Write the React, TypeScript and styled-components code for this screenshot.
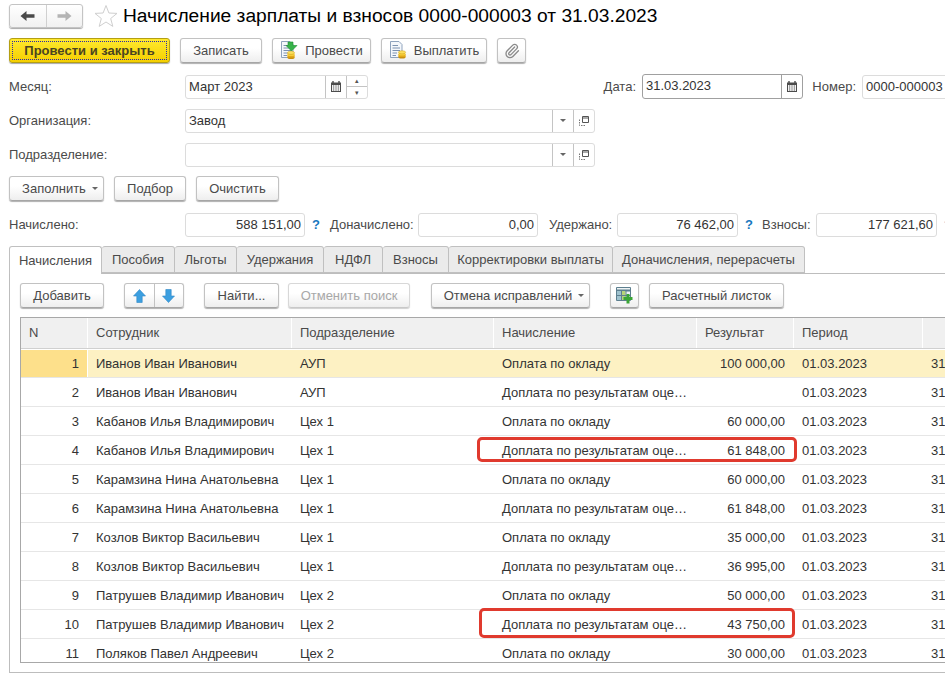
import React from "react";
import styled, { createGlobalStyle } from "styled-components";
import { Paperclip } from "lucide-react";

const GlobalStyle = createGlobalStyle`
  html, body {
    margin: 0;
    padding: 0;
    background: #fff;
  }
  * {
    box-sizing: border-box;
  }
`;

const rows = [
  ["1", "Иванов Иван Иванович", "АУП", "Оплата по окладу", "100 000,00"],
  ["2", "Иванов Иван Иванович", "АУП", "Доплата по результатам оце…", ""],
  ["3", "Кабанов Илья Владимирович", "Цех 1", "Оплата по окладу", "60 000,00"],
  ["4", "Кабанов Илья Владимирович", "Цех 1", "Доплата по результатам оце…", "61 848,00"],
  ["5", "Карамзина Нина Анатольевна", "Цех 1", "Оплата по окладу", "60 000,00"],
  ["6", "Карамзина Нина Анатольевна", "Цех 1", "Доплата по результатам оце…", "61 848,00"],
  ["7", "Козлов Виктор Васильевич", "Цех 1", "Оплата по окладу", "35 000,00"],
  ["8", "Козлов Виктор Васильевич", "Цех 1", "Доплата по результатам оце…", "36 995,00"],
  ["9", "Патрушев Владимир Иванович", "Цех 2", "Оплата по окладу", "50 000,00"],
  ["10", "Патрушев Владимир Иванович", "Цех 2", "Доплата по результатам оце…", "43 750,00"],
  ["11", "Поляков Павел Андреевич", "Цех 2", "Оплата по окладу", "30 000,00"],
];

const tabs = [
  { label: "Начисления", width: 93 },
  { label: "Пособия", width: 73 },
  { label: "Льготы", width: 62 },
  { label: "Удержания", width: 87 },
  { label: "НДФЛ", width: 59 },
  { label: "Взносы", width: 66 },
  { label: "Корректировки выплаты", width: 164 },
  { label: "Доначисления, перерасчеты", width: 192 },
];

const ArrowLeft = ({ color }: { color: string }) => (
  <svg width="15" height="10" viewBox="0 0 15 10">
    <path d="M0.5 5 L6.5 0 V3.3 H14.5 V6.7 H6.5 V10 Z" fill={color} />
  </svg>
);

const ArrowRight = ({ color }: { color: string }) => (
  <svg width="15" height="10" viewBox="0 0 15 10">
    <path d="M14.5 5 L8.5 0 V3.3 H0.5 V6.7 H8.5 V10 Z" fill={color} />
  </svg>
);

const StarIcon = () => (
  <svg width="24" height="24" viewBox="0 0 24 24">
    <path
      d="M12 1.5 L14.9 9 L23 9.4 L16.7 14.5 L18.8 22.4 L12 18 L5.2 22.4 L7.3 14.5 L1 9.4 L9.1 9 Z"
      fill="#fff"
      stroke="#cfcfcf"
      strokeWidth="1"
    />
  </svg>
);

const Coins = ({ x, y }: { x: number; y: number }) => (
  <g transform={`translate(${x} ${y})`}>
    <ellipse cx="4" cy="6.5" rx="3.6" ry="1.6" fill="#c98f10" />
    <rect x="0.4" y="3.5" width="7.2" height="3" fill="#e0a818" />
    <ellipse cx="4" cy="3.5" rx="3.6" ry="1.6" fill="#f7cf3a" />
    <ellipse cx="4" cy="1.8" rx="3.6" ry="1.6" fill="#fbdf5c" stroke="#cf9a14" strokeWidth="0.5" />
  </g>
);

const DocLines = () => (
  <>
    <path d="M1.5 0.5 H10 L13 3.5 V16.5 H1.5 Z" fill="#f4f7fb" stroke="#8fa3bd" />
    <path d="M3.5 4.5 H9 M3.5 7 H11 M3.5 9.5 H11 M3.5 12 H8 M3.5 14.5 H7" stroke="#7c92b0" />
  </>
);

const PostIcon = () => (
  <svg width="19" height="19" viewBox="0 0 19 19">
    <DocLines />
    <Coins x={7} y={10} />
    <path d="M8 1 H13 V4.5 H17 L11.5 10 L6 4.5 H8 Z" fill="#37b34a" stroke="#1f8f33" strokeWidth="0.6" />
  </svg>
);

const PayIcon = () => (
  <svg width="19" height="19" viewBox="0 0 19 19">
    <DocLines />
    <Coins x={9} y={9.5} />
  </svg>
);

const CalendarIcon = () => (
  <svg width="10" height="11" viewBox="0 0 10 11">
    <path d="M0 1.5 H10 V11 H0 Z" fill="#4c4c4c" />
    <path d="M2 0 V2 M8 0 V2" stroke="#4c4c4c" strokeWidth="1.4" />
    <rect x="1" y="4" width="8" height="6" fill="#f2f2f2" />
    <path d="M2 5 H3.2 M4.4 5 H5.6 M6.8 5 H8 M2 7 H3.2 M4.4 7 H5.6 M6.8 7 H8 M2 9 H3.2 M4.4 9 H5.6 M6.8 9 H8" stroke="#555" />
  </svg>
);

const OpenIcon = () => (
  <svg width="10" height="10" viewBox="0 0 10 10">
    <path d="M3.5 0.5 H9.5 V6.5 H3.5 Z M3.5 2 H9.5" fill="#fff" stroke="#555" />
    <path d="M0.5 3.5 V9.5 H6.5" fill="none" stroke="#777" strokeDasharray="1.5 1" />
  </svg>
);

const BlueUp = () => (
  <svg width="13" height="14" viewBox="0 0 13 14">
    <path d="M6.5 0.5 L12.5 7 H9.2 V13.5 H3.8 V7 H0.5 Z" fill="#3c9fe0" stroke="#2f86c6" strokeWidth="0.6" />
  </svg>
);

const BlueDown = () => (
  <svg width="13" height="14" viewBox="0 0 13 14">
    <path d="M6.5 13.5 L12.5 7 H9.2 V0.5 H3.8 V7 H0.5 Z" fill="#3c9fe0" stroke="#2f86c6" strokeWidth="0.6" />
  </svg>
);

const TableAddIcon = () => (
  <svg width="17" height="17" viewBox="0 0 17 17">
    <path d="M0.5 0.5 H14.5 V13.5 H0.5 Z" fill="#eef3f4" stroke="#5d7f8f" />
    <path d="M0.5 3.5 H14.5" stroke="#5d7f8f" strokeWidth="2" />
    <rect x="1" y="4" width="4" height="9" fill="#9fc2ce" />
    <rect x="6" y="4" width="3.5" height="9" fill="#b7d57a" />
    <path d="M5.5 4 V13 M10 4 V13 M1 8.5 H14" stroke="#5d7f8f" />
    <path d="M10.5 7 H13.5 V10 H16.5 V13 H13.5 V16.5 H10.5 V13 H7.5 V10 H10.5 Z" fill="#3aa535" />
  </svg>
);

export default function App() {
  return (
    <Page>
      <GlobalStyle />
      <TitleBar>
        <NavGroup>
          <NavCell>
            <ArrowLeft color="#4a4a4a" />
          </NavCell>
          <NavCell $divided>
            <ArrowRight color="#b4b4b4" />
          </NavCell>
        </NavGroup>
        <StarSlot>
          <StarIcon />
        </StarSlot>
        <Title>Начисление зарплаты и взносов 0000-000003 от 31.03.2023</Title>
      </TitleBar>

      <Toolbar>
        <PrimaryButton>
          <FocusRing>Провести и закрыть</FocusRing>
        </PrimaryButton>
        <Button $width={82}>Записать</Button>
        <Button $width={99}>
          <PostIcon />
          Провести
        </Button>
        <Button $width={106}>
          <PayIcon />
          Выплатить
        </Button>
        <Button $width={29}>
          <ClipIcon size={16} strokeWidth={2} />
        </Button>
      </Toolbar>

      <FormRow $top={11}>
        <Label $width={185} $pad={9}>
          Месяц:
        </Label>
        <Field $width={183}>
          <FieldText>Март 2023</FieldText>
          <FieldButton $width={21}>
            <CalendarIcon />
          </FieldButton>
          <Spinner>
            <SpinPart>▴</SpinPart>
            <SpinPart $lower>▾</SpinPart>
          </Spinner>
        </Field>
        <Label $width={274} $align="right" $pad={6}>
          Дата:
        </Label>
        <Field $width={161} $focused>
          <FieldText>31.03.2023</FieldText>
          <FieldButton $width={21} $focused>
            <CalendarIcon />
          </FieldButton>
        </Field>
        <Label $width={59} $align="right" $pad={6}>
          Номер:
        </Label>
        <Field $width={100}>
          <FieldText>0000-000003</FieldText>
        </Field>
      </FormRow>

      <FormRow $top={9}>
        <Label $width={185} $pad={9}>
          Организация:
        </Label>
        <Field $width={410}>
          <FieldText>Завод</FieldText>
          <FieldButton $width={21}>
            <Caret />
          </FieldButton>
          <FieldButton $width={21}>
            <OpenIcon />
          </FieldButton>
        </Field>
      </FormRow>

      <FormRow $top={9}>
        <Label $width={185} $pad={9}>
          Подразделение:
        </Label>
        <Field $width={410}>
          <FieldText />
          <FieldButton $width={21}>
            <Caret />
          </FieldButton>
          <FieldButton $width={21}>
            <OpenIcon />
          </FieldButton>
        </Field>
      </FormRow>

      <CommandRow>
        <Button $width={95} $menu>
          Заполнить
          <Caret />
        </Button>
        <Button $width={72}>Подбор</Button>
        <Button $width={83}>Очистить</Button>
      </CommandRow>

      <FormRow $top={10}>
        <Label $width={185} $pad={9}>
          Начислено:
        </Label>
        <Field $width={120}>
          <FieldText $right>588 151,00</FieldText>
        </Field>
        <Help>?</Help>
        <Label $width={88}>Доначислено:</Label>
        <Field $width={120}>
          <FieldText $right>0,00</FieldText>
        </Field>
        <Label $width={79} $pad={11}>
          Удержано:
        </Label>
        <Field $width={121}>
          <FieldText $right>76 462,00</FieldText>
        </Field>
        <Help $width={24}>?</Help>
        <Label $width={54}>Взносы:</Label>
        <Field $width={121}>
          <FieldText $right>177 621,60</FieldText>
        </Field>
        <Help>?</Help>
      </FormRow>

      <TabStrip>
        {tabs.map((tab, i) => (
          <Tab key={tab.label} $width={tab.width} $active={i === 0}>
            {tab.label}
          </Tab>
        ))}
      </TabStrip>

      <Panel>
        <PanelToolbar>
          <Button $width={84}>Добавить</Button>
          <ArrowGroup>
            <ArrowCell>
              <BlueUp />
            </ArrowCell>
            <ArrowCell $divided>
              <BlueDown />
            </ArrowCell>
          </ArrowGroup>
          <Button $width={75} $left={20}>
            Найти...
          </Button>
          <Button $width={122} $left={9} $disabled>
            Отменить поиск
          </Button>
          <Button $width={159} $left={21} $menu>
            Отмена исправлений
            <Caret />
          </Button>
          <Button $width={29} $left={20}>
            <TableAddIcon />
          </Button>
          <Button $width={135} $left={10}>
            Расчетный листок
          </Button>
        </PanelToolbar>

        <Table>
          <HeaderRow>
            <HeaderCell>N</HeaderCell>
            <HeaderCell>Сотрудник</HeaderCell>
            <HeaderCell>Подразделение</HeaderCell>
            <HeaderCell>Начисление</HeaderCell>
            <HeaderCell>Результат</HeaderCell>
            <HeaderCell>Период</HeaderCell>
            <HeaderCell />
          </HeaderRow>
          {rows.map((row, i) => (
            <DataRow key={row[0]} $current={i === 0}>
              <NumberCell $current={i === 0}>{row[0]}</NumberCell>
              <Cell>{row[1]}</Cell>
              <Cell>{row[2]}</Cell>
              <Cell>{row[3]}</Cell>
              <AmountCell>{row[4]}</AmountCell>
              <Cell>01.03.2023</Cell>
              <Cell>31.03.2023</Cell>
              {(i === 3 || i === 9) && <Highlight $tall={i === 9} />}
            </DataRow>
          ))}
        </Table>
      </Panel>
    </Page>
  );
}

const Page = styled.div`
  width: 945px;
  height: 675px;
  overflow: hidden;
  display: flex;
  flex-direction: column;
  font-family: "Liberation Sans", Arial, sans-serif;
  font-size: 13px;
  color: #4a4a4a;
  background: #fff;
`;

const TitleBar = styled.div`
  display: flex;
  align-items: center;
  height: 24px;
  margin: 4px 0 0 9px;
`;

const NavGroup = styled.div`
  display: flex;
  width: 74px;
  height: 24px;
  border: 1px solid #c4c4c4;
  border-radius: 3px;
  background: linear-gradient(#ffffff, #f1f1f1);
  box-shadow: 0 1px 1px #a8a8a8;
`;

const NavCell = styled.div<{ $divided?: boolean }>`
  flex: 1;
  display: flex;
  align-items: center;
  justify-content: center;
  border-left: ${({ $divided }) => ($divided ? "1px solid #d0d0d0" : "none")};
`;

const StarSlot = styled.div`
  display: flex;
  margin-left: 11px;
`;

const Title = styled.div`
  margin-left: 5px;
  font-size: 19.2px;
  color: #000;
  white-space: nowrap;
`;

const Toolbar = styled.div`
  display: flex;
  gap: 10px;
  height: 25px;
  margin: 10px 0 0 9px;
`;

const Button = styled.div<{ $width: number; $left?: number; $disabled?: boolean; $menu?: boolean }>`
  display: flex;
  flex: none;
  align-items: center;
  justify-content: center;
  gap: 6px;
  width: ${({ $width }) => $width}px;
  height: 25px;
  margin-left: ${({ $left }) => $left ?? 0}px;
  padding-left: ${({ $menu }) => ($menu ? 7 : 0)}px;
  border: 1px solid ${({ $disabled }) => ($disabled ? "#d8d8d8" : "#c2c2c2")};
  border-bottom-color: ${({ $disabled }) => ($disabled ? "#c8c8c8" : "#a6a6a6")};
  border-radius: 3px;
  background: linear-gradient(#ffffff 40%, #eeeeee);
  box-shadow: 0 1px 1px ${({ $disabled }) => ($disabled ? "#d0d0d0" : "#b0b0b0")};
  color: ${({ $disabled }) => ($disabled ? "#a8a8a8" : "#4a4a4a")};
  white-space: nowrap;
`;

const PrimaryButton = styled.div`
  flex: none;
  width: 161px;
  height: 25px;
  padding: 2px;
  border: 1px solid #b49f12;
  border-radius: 3px;
  background: linear-gradient(#ffe92e, #f5cf00);
  box-shadow: 0 1px 1px #a8a8a8;
  color: #4a4420;
  font-weight: bold;
`;

const FocusRing = styled.div`
  display: flex;
  align-items: center;
  justify-content: center;
  height: 100%;
  border: 1px dotted #2b2ba8;
  white-space: nowrap;
`;

const ClipIcon = styled(Paperclip)`
  color: #8b8b8b;
`;

const FormRow = styled.div<{ $top: number }>`
  display: flex;
  flex: none;
  align-items: center;
  height: 25px;
  margin-top: ${({ $top }) => $top}px;
`;

const CommandRow = styled.div`
  display: flex;
  flex: none;
  gap: 10px;
  height: 26px;
  margin: 9px 0 0 9px;
`;

const Label = styled.div<{ $width: number; $pad?: number; $align?: string }>`
  flex: none;
  width: ${({ $width }) => $width}px;
  padding-left: ${({ $pad, $align }) => ($align ? 0 : $pad ?? 0)}px;
  padding-right: ${({ $pad, $align }) => ($align ? $pad ?? 0 : 0)}px;
  text-align: ${({ $align }) => $align ?? "left"};
  white-space: nowrap;
`;

const Field = styled.div<{ $width: number; $focused?: boolean }>`
  display: flex;
  flex: none;
  align-items: stretch;
  width: ${({ $width }) => $width}px;
  height: ${({ $focused }) => ($focused ? 25 : 24)}px;
  border: 1px solid ${({ $focused }) => ($focused ? "#a0a0a0" : "#dcdcdc")};
  border-radius: 3px;
  background: #fff;
  color: #333;
`;

const FieldText = styled.div<{ $right?: boolean }>`
  flex: 1;
  min-width: 0;
  padding: 0 3px;
  line-height: 22px;
  text-align: ${({ $right }) => ($right ? "right" : "left")};
  white-space: nowrap;
`;

const FieldButton = styled.div<{ $width: number; $focused?: boolean }>`
  display: flex;
  flex: none;
  align-items: center;
  justify-content: center;
  width: ${({ $width }) => $width}px;
  border-left: 1px solid ${({ $focused }) => ($focused ? "#a0a0a0" : "#c4c4c4")};
`;

const Spinner = styled.div`
  display: flex;
  flex: none;
  flex-direction: column;
  width: 21px;
  border-left: 1px solid #c4c4c4;
`;

const SpinPart = styled.div<{ $lower?: boolean }>`
  flex: 1;
  display: flex;
  align-items: center;
  justify-content: center;
  border-top: ${({ $lower }) => ($lower ? "1px solid #c4c4c4" : "none")};
  font-size: 7px;
  line-height: 1;
  color: #555;
`;

const Caret = styled.span`
  display: inline-block;
  flex: none;
  width: 0;
  height: 0;
  border-left: 3px solid transparent;
  border-right: 3px solid transparent;
  border-top: 3px solid #666;
`;

const Help = styled.div<{ $width?: number }>`
  flex: none;
  width: ${({ $width }) => $width ?? 25}px;
  padding-left: 7px;
  color: #1878c0;
  font-weight: bold;
`;

const TabStrip = styled.div`
  display: flex;
  flex: none;
  height: 27px;
  margin: 9px 0 0 9px;
  position: relative;
  z-index: 1;
`;

const Tab = styled.div<{ $width: number; $active?: boolean }>`
  display: flex;
  flex: none;
  align-items: center;
  justify-content: center;
  width: ${({ $width }) => $width}px;
  height: ${({ $active }) => ($active ? 28 : 27)}px;
  border: 1px solid #c0c0c0;
  border-left-width: ${({ $active }) => ($active ? 1 : 0)}px;
  border-bottom-width: ${({ $active }) => ($active ? 0 : 1)}px;
  border-radius: 3px 3px 0 0;
  background: ${({ $active }) => ($active ? "#fff" : "#ebebeb")};
  white-space: nowrap;
`;

const Panel = styled.div`
  display: flex;
  flex: none;
  flex-direction: column;
  width: 960px;
  height: 400px;
  margin-left: 9px;
  padding: 9px 10px;
  border: 1px solid #bdbdbd;
`;

const PanelToolbar = styled.div`
  display: flex;
  flex: none;
  height: 25px;
  margin-bottom: 9px;
`;

const ArrowGroup = styled.div`
  display: flex;
  flex: none;
  width: 60px;
  height: 25px;
  margin-left: 20px;
  border: 1px solid #c2c2c2;
  border-bottom-color: #a6a6a6;
  border-radius: 3px;
  background: linear-gradient(#ffffff 40%, #eeeeee);
  box-shadow: 0 1px 1px #b0b0b0;
`;

const ArrowCell = styled.div<{ $divided?: boolean }>`
  flex: 1;
  display: flex;
  align-items: center;
  justify-content: center;
  border-left: ${({ $divided }) => ($divided ? "1px solid #c2c2c2" : "none")};
`;

const Table = styled.div`
  flex: 1;
  min-height: 0;
  overflow: hidden;
  border: 1px solid #a8a8a8;
  border-right: none;
  color: #333;
`;

const columns = "67px 204px 202px 203px 97px 129px 60px";

const HeaderRow = styled.div`
  display: grid;
  grid-template-columns: ${columns};
  height: 31px;
  border-bottom: 1px solid #d0d0d0;
  background: #f0f0f0;
`;

const HeaderCell = styled.div`
  padding: 0 8px;
  line-height: 29px;
  border-right: 1px solid #fff;
  color: #4a4a4a;
`;

const DataRow = styled.div<{ $current?: boolean }>`
  position: relative;
  display: grid;
  grid-template-columns: ${columns};
  height: 29px;
  border-bottom: 1px solid #e6e6e6;
  border-top: 1px solid #fff;
  background: ${({ $current }) => ($current ? "#fdf1c3" : "#fff")};
`;

const Cell = styled.div`
  padding: 0 8px;
  line-height: 27px;
  white-space: nowrap;
  overflow: hidden;
  border-right: 1px solid transparent;
`;

const NumberCell = styled(Cell)<{ $current?: boolean }>`
  text-align: right;
  padding-right: 8px;
  background: ${({ $current }) => ($current ? "#fde08b" : "transparent")};
  border-right-color: ${({ $current }) => ($current ? "#fff" : "transparent")};
`;

const AmountCell = styled(Cell)`
  text-align: right;
`;

const Highlight = styled.div<{ $tall?: boolean }>`
  position: absolute;
  left: ${({ $tall }) => ($tall ? 458 : 456)}px;
  top: ${({ $tall }) => ($tall ? -3 : 0)}px;
  width: ${({ $tall }) => ($tall ? 316 : 320)}px;
  height: ${({ $tall }) => ($tall ? 30 : 25)}px;
  border: 3px solid #e03a2e;
  border-radius: 5px;
`;
